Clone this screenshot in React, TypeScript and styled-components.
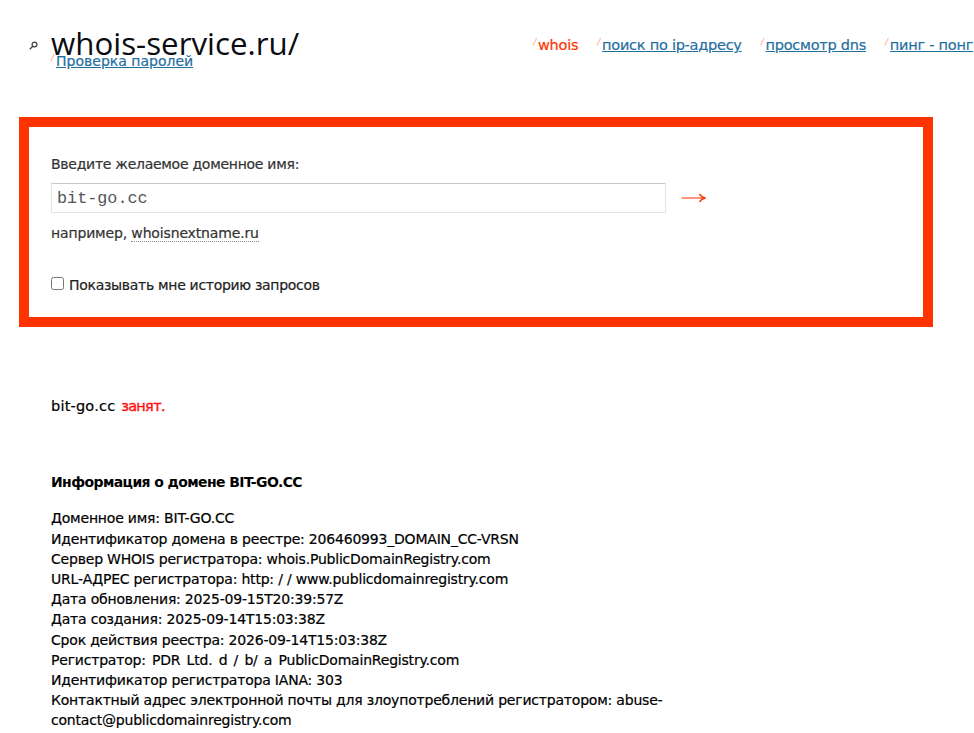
import styled, { createGlobalStyle } from "styled-components";

const GlobalStyle = createGlobalStyle`
  html, body {
    margin: 0;
    padding: 0;
    background: #fff;
    overflow: hidden;
  }
  body {
    width: 974px;
    height: 733px;
    font-family: "DejaVu Sans", "Noto Sans", sans-serif;
    color: #000;
  }
`;

const Page = styled.div`
  width: 974px;
  height: 733px;
  overflow: hidden;
`;

const Header = styled.header`
  height: 117px;
  display: flex;
  justify-content: space-between;
  padding: 0 1px 0 29px;
  box-sizing: border-box;
`;

const LogoColumn = styled.div`
  display: flex;
  flex-direction: column;
`;

const LogoRow = styled.div`
  display: flex;
  align-items: center;
  gap: 13px;
  padding-top: 23px;
`;

const SearchSvg = styled.svg`
  margin-top: 4px;
`;

const Logo = styled.div`
  font-family: "Open Sans", sans-serif;
  font-size: 31.3px;
  line-height: 40px;
  color: #0b0b12;
`;

const PasswordItem = styled.div`
  margin: -14px 0 0 22px;
  font-size: 14px;
  line-height: 18px;
  -webkit-text-stroke: 0.2px;
`;

const Nav = styled.nav`
  display: flex;
  gap: 19px;
  padding-top: 33px;
  font-size: 14.5px;
  line-height: 18px;
  letter-spacing: -0.25px;
  white-space: nowrap;
  -webkit-text-stroke: 0.2px;
`;

const Slash = styled.i`
  color: #ff9a82;
  font-size: 9px;
  vertical-align: 5px;
  margin-right: 2px;
  font-style: italic;
  -webkit-text-stroke: 0;
`;

const NavLink = styled.a<{ $active?: boolean }>`
  color: ${(p) => (p.$active ? "#ff3300" : "#1f6f9f")};
  text-decoration: ${(p) => (p.$active ? "none" : "underline")};
`;

const SearchBox = styled.form`
  margin-left: 19px;
  width: 914px;
  height: 210px;
  box-sizing: border-box;
  border: 10px solid #ff3300;
  padding: 28px 22px 0;
`;

const Label = styled.div`
  font-size: 14px;
  line-height: 18px;
  letter-spacing: -0.27px;
  color: #333;
  -webkit-text-stroke: 0.2px;
`;

const InputRow = styled.div`
  display: flex;
  align-items: center;
  gap: 15px;
  margin-top: 10px;
`;

const DomainInput = styled.input`
  width: 615px;
  height: 30px;
  box-sizing: border-box;
  border: 1px solid #e3e3e8;
  border-top-color: #c8c8c8;
  padding: 0 5px;
  font-family: "Liberation Mono", monospace;
  font-size: 16.8px;
  color: #555;
  outline: none;
`;

const Hint = styled.div`
  margin-top: 11px;
  font-size: 14px;
  line-height: 18px;
  letter-spacing: -0.15px;
  color: #333;
  -webkit-text-stroke: 0.2px;
`;

const HintLink = styled.span`
  border-bottom: 1px dotted #888;
`;

const HistoryLabel = styled.label`
  display: flex;
  align-items: center;
  gap: 5px;
  margin-top: 34px;
  font-size: 14px;
  line-height: 18px;
  letter-spacing: -0.3px;
  color: #222;
  -webkit-text-stroke: 0.2px;
`;

const HistoryCheck = styled.input`
  width: 13px;
  height: 13px;
  margin: 0 0 3px;
`;

const Results = styled.section`
  padding: 69px 0 0 51px;
  width: 620px;
  font-size: 14px;
  line-height: 20.2px;
  letter-spacing: -0.2px;
  color: #000;
  -webkit-text-stroke: 0.2px;
`;

const Status = styled.div`
  margin-bottom: 56px;
  font-size: 14.5px;
  letter-spacing: 0.2px;
`;

const Busy = styled.span`
  margin-left: 1px;
  color: #ff1010;
  letter-spacing: -0.7px;
  -webkit-text-stroke: 0.4px;
`;

const InfoTitle = styled.div`
  font-weight: bold;
  font-size: 14px;
  letter-spacing: -0.6px;
  margin-bottom: 16px;
  -webkit-text-stroke: 0;
`;

const InfoLine = styled.div<{ $wide?: boolean }>`
  word-spacing: ${(p) => (p.$wide ? "2px" : "0")};
`;

const info = [
  { text: "Доменное имя: BIT-GO.CC" },
  { text: "Идентификатор домена в реестре: 206460993_DOMAIN_CC-VRSN" },
  { text: "Сервер WHOIS регистратора: whois.PublicDomainRegistry.com" },
  { text: "URL-АДРЕС регистратора: http: / / www.publicdomainregistry.com" },
  { text: "Дата обновления: 2025-09-15T20:39:57Z" },
  { text: "Дата создания: 2025-09-14T15:03:38Z" },
  { text: "Срок действия реестра: 2026-09-14T15:03:38Z" },
  { text: "Регистратор: PDR Ltd. d / b/ a PublicDomainRegistry.com", wide: true },
  { text: "Идентификатор регистратора IANA: 303" },
  { text: "Контактный адрес электронной почты для злоупотреблений регистратором: abuse-contact@publicdomainregistry.com" },
];

const navItems = [
  { label: "whois", active: true },
  { label: "поиск по ip-адресу" },
  { label: "просмотр dns" },
  { label: "пинг - понг" },
];

const SearchIcon = () => (
  <SearchSvg width="9" height="9" viewBox="0 0 9 9" fill="none" stroke="#444" strokeWidth="1.3">
    <circle cx="5.5" cy="3.5" r="2.4" />
    <path d="M3.8 5.2 L0.8 8.2" />
  </SearchSvg>
);

const ArrowIcon = () => (
  <svg width="25" height="12" viewBox="0 0 25 12" fill="none" stroke="#ff3300">
    <path d="M0.5 6 H23" stroke="#ff6a45" strokeWidth="1.4" />
    <path d="M18.5 2 Q20 5 24.5 6 Q20 7 18.5 10" strokeWidth="1.5" />
  </svg>
);

const App = () => (
  <Page>
    <GlobalStyle />
    <Header>
      <LogoColumn>
        <LogoRow>
          <SearchIcon />
          <Logo>whois-service.ru/</Logo>
        </LogoRow>
        <PasswordItem>
          <Slash>/</Slash>
          <NavLink href="#">Проверка паролей</NavLink>
        </PasswordItem>
      </LogoColumn>
      <Nav>
        {navItems.map((item) => (
          <span key={item.label}>
            <Slash>/</Slash>
            <NavLink href="#" $active={item.active}>
              {item.label}
            </NavLink>
          </span>
        ))}
      </Nav>
    </Header>
    <SearchBox>
      <Label>Введите желаемое доменное имя:</Label>
      <InputRow>
        <DomainInput defaultValue="bit-go.cc" />
        <ArrowIcon />
      </InputRow>
      <Hint>
        например, <HintLink>whoisnextname.ru</HintLink>
      </Hint>
      <HistoryLabel>
        <HistoryCheck type="checkbox" />
        Показывать мне историю запросов
      </HistoryLabel>
    </SearchBox>
    <Results>
      <Status>
        bit-go.cc <Busy>занят.</Busy>
      </Status>
      <InfoTitle>Информация о домене BIT-GO.CC</InfoTitle>
      {info.map((line) => (
        <InfoLine key={line.text} $wide={line.wide}>
          {line.text}
        </InfoLine>
      ))}
    </Results>
  </Page>
);

export default App;
